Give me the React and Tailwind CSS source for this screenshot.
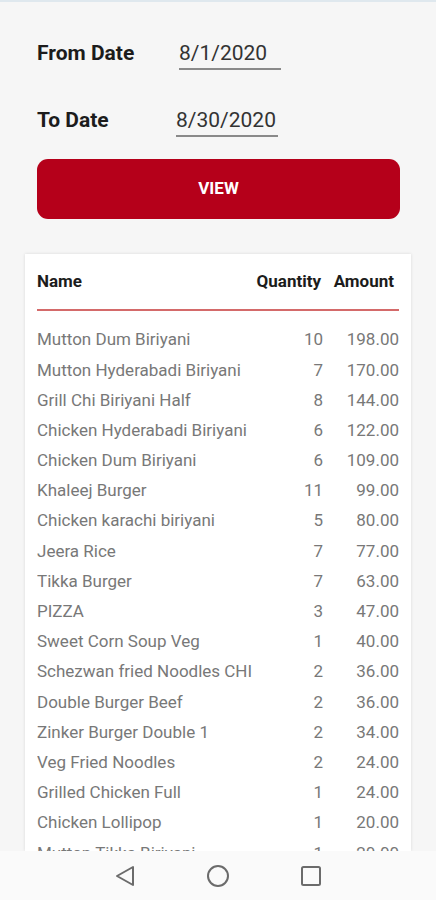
import React from "react";

const rows = [
  ["Mutton Dum Biriyani", "10", "198.00"],
  ["Mutton Hyderabadi Biriyani", "7", "170.00"],
  ["Grill Chi Biriyani Half", "8", "144.00"],
  ["Chicken Hyderabadi Biriyani", "6", "122.00"],
  ["Chicken Dum Biriyani", "6", "109.00"],
  ["Khaleej Burger", "11", "99.00"],
  ["Chicken karachi biriyani", "5", "80.00"],
  ["Jeera Rice", "7", "77.00"],
  ["Tikka Burger", "7", "63.00"],
  ["PIZZA", "3", "47.00"],
  ["Sweet Corn Soup Veg", "1", "40.00"],
  ["Schezwan fried Noodles CHI", "2", "36.00"],
  ["Double Burger Beef", "2", "36.00"],
  ["Zinker Burger Double 1", "2", "34.00"],
  ["Veg Fried Noodles", "2", "24.00"],
  ["Grilled Chicken Full", "1", "24.00"],
  ["Chicken Lollipop", "1", "20.00"],
  ["Mutton Tikka Biriyani", "1", "20.00"],
];

export default function App() {
  return (
    <div
      className="w-[436px] h-[900px] flex flex-col bg-[#f6f6f6] overflow-hidden"
      style={{ fontFamily: "Roboto, 'Liberation Sans', sans-serif" }}
    >
      <div className="h-[2px] bg-[#dfe8ee]" />
      <div className="flex-1 overflow-hidden flex flex-col">
        <div className="px-[37px] pt-[35px]">
          <div className="flex items-center h-[34px]">
            <div className="w-[142px] text-[21px] font-bold text-[#1c1c1c]">From Date</div>
            <div className="w-[102px] border-b-2 border-[#8a8a8a] text-[21px] text-[#333] leading-[30px]">8/1/2020</div>
          </div>
          <div className="flex items-center h-[34px] mt-[33px]">
            <div className="w-[139px] text-[21px] font-bold text-[#1c1c1c]">To Date</div>
            <div className="w-[102px] border-b-2 border-[#8a8a8a] text-[21px] text-[#333] leading-[30px]">8/30/2020</div>
          </div>
          <button className="mt-[21px] w-[363px] h-[60px] rounded-[11px] bg-[#b5001a] text-white text-[17px] font-bold">
            VIEW
          </button>
        </div>
        <div className="mt-[35px] mx-[25px] flex-1 bg-white shadow-[0_0_3px_rgba(0,0,0,0.12)] px-[12px] overflow-hidden">
          <div className="flex items-center h-[55px] pt-[1px] text-[17px] font-bold text-[#1c1c1c]">
            <div className="flex-1">Name</div>
            <div className="w-[80px] text-right">Quantity</div>
            <div className="w-[78px] text-right pr-[5px]">Amount</div>
          </div>
          <div className="h-[2px] bg-[#d46a6a]" />
          <div className="pt-[14px]">
            {rows.map((r, i) => (
              <div key={i} className="flex items-center h-[30.2px] text-[17px] text-[#787878]">
                <div className="flex-1 truncate">{r[0]}</div>
                <div className="w-[60px] text-right">{r[1]}</div>
                <div className="w-[76px] text-right">{r[2]}</div>
              </div>
            ))}
          </div>
        </div>
      </div>
      <div className="h-[49px] bg-[#fafafa] flex items-center justify-center">
        <div className="flex items-center gap-[70px]">
          <svg width="22" height="22" viewBox="0 0 22 22">
            <path d="M19 2 L19 20 L3 11 Z" fill="none" stroke="#6b6b6b" strokeWidth="2" strokeLinejoin="round" />
          </svg>
          <svg width="24" height="24" viewBox="0 0 24 24">
            <circle cx="12" cy="12" r="10" fill="none" stroke="#6b6b6b" strokeWidth="2" />
          </svg>
          <svg width="22" height="22" viewBox="0 0 22 22">
            <rect x="2" y="2" width="18" height="18" rx="1.5" fill="none" stroke="#6b6b6b" strokeWidth="2" />
          </svg>
        </div>
      </div>
    </div>
  );
}
